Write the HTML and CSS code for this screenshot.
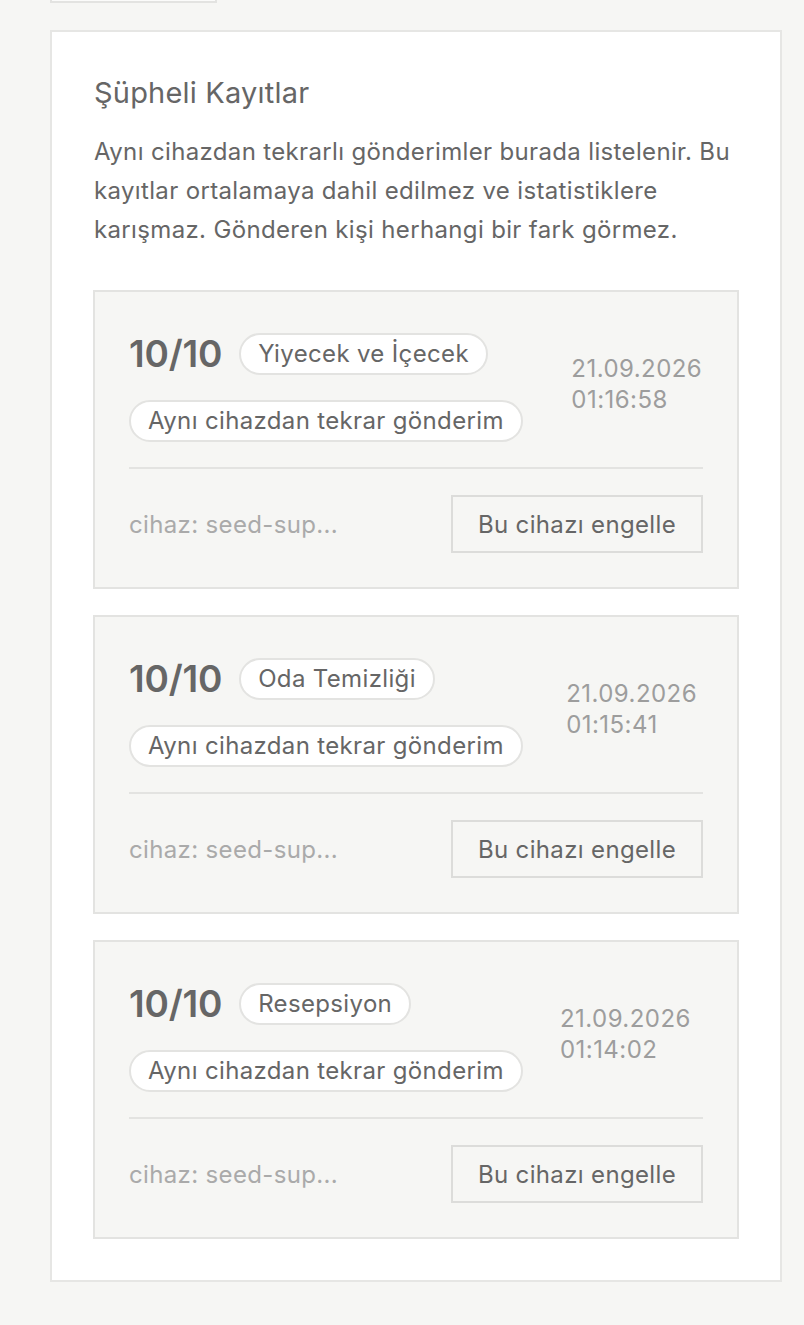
FILE: index.html
```html
<!DOCTYPE html>
<html lang="tr">
<head>
<meta charset="utf-8">
<title>Şüpheli Kayıtlar</title>
<link rel="stylesheet" href="styles.css">
</head>
<body>
<div class="page">
  <div class="prev-button"></div>
  <section class="panel">
    <h2 class="panel-title">Şüpheli Kayıtlar</h2>
    <p class="panel-desc">Aynı cihazdan tekrarlı gönderimler burada listelenir. Bu kayıtlar ortalamaya dahil edilmez ve istatistiklere karışmaz. Gönderen kişi herhangi bir fark görmez.</p>
    <div class="list">
      <article class="item">
        <div class="item-head">
          <div class="item-tags">
            <span class="score">10/10</span>
            <span class="pill">Yiyecek ve İçecek</span>
            <span class="pill">Aynı cihazdan tekrar gönderim</span>
          </div>
          <div class="date">21.09.2026 01:16:58</div>
        </div>
        <div class="item-foot">
          <span class="device">cihaz: seed-sup...</span>
          <button class="block-btn">Bu cihazı engelle</button>
        </div>
      </article>
      <article class="item">
        <div class="item-head">
          <div class="item-tags">
            <span class="score">10/10</span>
            <span class="pill">Oda Temizliği</span>
            <span class="pill">Aynı cihazdan tekrar gönderim</span>
          </div>
          <div class="date">21.09.2026 01:15:41</div>
        </div>
        <div class="item-foot">
          <span class="device">cihaz: seed-sup...</span>
          <button class="block-btn">Bu cihazı engelle</button>
        </div>
      </article>
      <article class="item">
        <div class="item-head">
          <div class="item-tags">
            <span class="score">10/10</span>
            <span class="pill">Resepsiyon</span>
            <span class="pill">Aynı cihazdan tekrar gönderim</span>
          </div>
          <div class="date">21.09.2026 01:14:02</div>
        </div>
        <div class="item-foot">
          <span class="device">cihaz: seed-sup...</span>
          <button class="block-btn">Bu cihazı engelle</button>
        </div>
      </article>
    </div>
  </section>
</div>
</body>
</html>
```

FILE: styles.css
```css
* { box-sizing: border-box; }

html, body {
  margin: 0;
  padding: 0;
  background: #f6f6f4;
  font-family: Inter, "Noto Sans", "Liberation Sans", sans-serif;
  color: #666;
}

.page {
  padding: 0 22px 40px 50px;
}

.prev-button {
  width: 167px;
  height: 40px;
  margin-top: -37px;
  background: #fbfbfa;
  border: 2px solid #e3e3e1;
}

.panel {
  margin-top: 27px;
  background: #fff;
  border: 2px solid #e6e6e4;
  padding: 42px 41px 41px 41px;
}

.panel-title {
  margin: 0 0 0 1px;
  font-size: 29px;
  line-height: 38px;
  font-weight: 400;
  letter-spacing: 0.2px;
  color: #666;
}

.panel-desc {
  margin: 20px 0 0 1px;
  font-size: 24px;
  line-height: 39px;
  letter-spacing: 0.35px;
  color: #666;
}

.list {
  margin-top: 41px;
  display: flex;
  flex-direction: column;
  gap: 26px;
}

.item {
  background: #f6f6f4;
  border: 2px solid #e3e3e1;
  padding: 34px;
}

.item-head {
  display: flex;
  justify-content: space-between;
  align-items: center;
  gap: 10px;
  padding-bottom: 25px;
  border-bottom: 2px solid #e3e3e1;
}

.item-tags {
  display: flex;
  flex-wrap: wrap;
  align-items: center;
  column-gap: 17px;
  row-gap: 18px;
}

.score {
  font-size: 37px;
  line-height: 56px;
  font-weight: 600;
  letter-spacing: -0.2px;
  color: #666;
}

.pill {
  display: inline-block;
  background: #fff;
  border: 2px solid #e3e3e1;
  border-radius: 999px;
  padding: 0 17px;
  height: 42px;
  line-height: 38px;
  font-size: 24px;
  letter-spacing: 0.35px;
  color: #666;
  white-space: nowrap;
}

.date {
  font-size: 24px;
  line-height: 31px;
  letter-spacing: 0.45px;
  color: #9d9d9d;
}

.item-foot {
  display: flex;
  justify-content: space-between;
  align-items: center;
  padding-top: 26px;
}

.device {
  font-size: 24px;
  letter-spacing: 0.35px;
  color: #aaa;
}

.block-btn {
  font-family: inherit;
  font-size: 24px;
  letter-spacing: 0.35px;
  color: #666;
  background: #f6f6f4;
  border: 2px solid #dcdcda;
  height: 58px;
  padding: 0 25px;
  cursor: pointer;
}
```
